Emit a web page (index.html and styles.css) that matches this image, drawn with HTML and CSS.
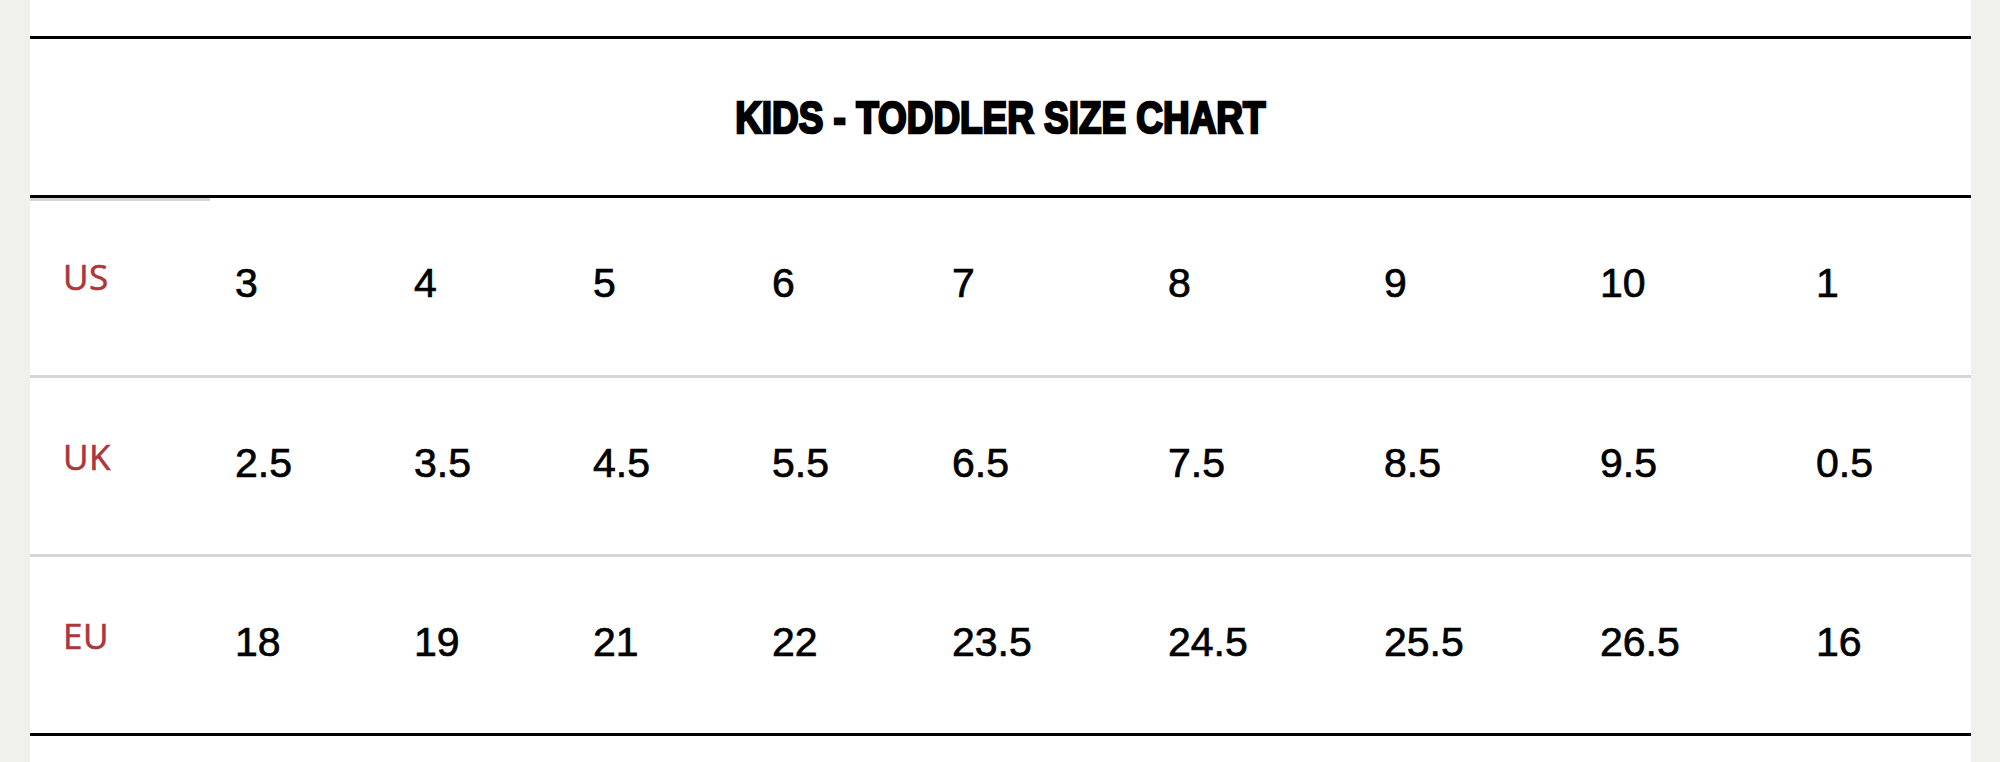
FILE: index.html
```html
<!DOCTYPE html>
<html lang="en">
<head>
<meta charset="utf-8">
<title>Kids - Toddler Size Chart</title>
<link rel="stylesheet" href="styles.css">
</head>
<body>
<div class="page">
  <div class="chart">
    <div class="chart-head">
      <h2 class="chart-title">KIDS - TODDLER SIZE CHART</h2>
    </div>
    <div class="row row-first">
      <div class="label">US</div>
      <div class="val">3</div><div class="val">4</div><div class="val">5</div><div class="val">6</div><div class="val">7</div><div class="val">8</div><div class="val">9</div><div class="val">10</div><div class="val">1</div>
    </div>
    <div class="row">
      <div class="label">UK</div>
      <div class="val">2.5</div><div class="val">3.5</div><div class="val">4.5</div><div class="val">5.5</div><div class="val">6.5</div><div class="val">7.5</div><div class="val">8.5</div><div class="val">9.5</div><div class="val">0.5</div>
    </div>
    <div class="row row-last">
      <div class="label">EU</div>
      <div class="val">18</div><div class="val">19</div><div class="val">21</div><div class="val">22</div><div class="val">23.5</div><div class="val">24.5</div><div class="val">25.5</div><div class="val">26.5</div><div class="val">16</div>
    </div>
  </div>
</div>
</body>
</html>
```
FILE: styles.css
```css
html, body {
  margin: 0;
  padding: 0;
}
body {
  background: #f0f0ec;
  height: 762px;
  overflow: hidden;
}
.page {
  margin: 0 29px 0 30px;
  background: #ffffff;
  height: 762px;
  padding-top: 36px;
  box-sizing: border-box;
}
.chart {
  border-top: 3px solid #000;
}
.chart-head {
  height: 156px;
  border-bottom: 3px solid #000;
  display: flex;
  align-items: center;
  justify-content: center;
}
.chart-title {
  margin: 0;
  font-family: "Liberation Sans", Arial, sans-serif;
  font-weight: 700;
  font-size: 45px;
  line-height: 1;
  color: #000;
  -webkit-text-stroke: 2.6px #000;
  display: inline-block;
  transform: scaleX(0.82);
  white-space: nowrap;
}
.row {
  display: grid;
  grid-template-columns: 180px 179px 179px 179px 180px 216px 216px 216px 216px 1fr;
  height: 176px;
  border-bottom: 3px solid #d6d6d6;
}
.row-first {
  height: 177px;
  background: linear-gradient(#d3d3d3, #d3d3d3) 0 0 / 180px 3px no-repeat;
}
.row-last {
  border-bottom-color: #000;
}
.label {
  padding: 55px 0 0 33px;
  font-family: "Open Sans", "Noto Sans", sans-serif;
  font-size: 35px;
  line-height: 48px;
  color: #ad363b;
  letter-spacing: 0.5px;
  -webkit-text-stroke: 0.6px #ad363b;
}
.val {
  padding: 61px 0 0 25px;
  font-family: "Liberation Sans", Arial, sans-serif;
  font-size: 41px;
  line-height: 48px;
  color: #000;
  -webkit-text-stroke: 0.7px #000;
}
```
